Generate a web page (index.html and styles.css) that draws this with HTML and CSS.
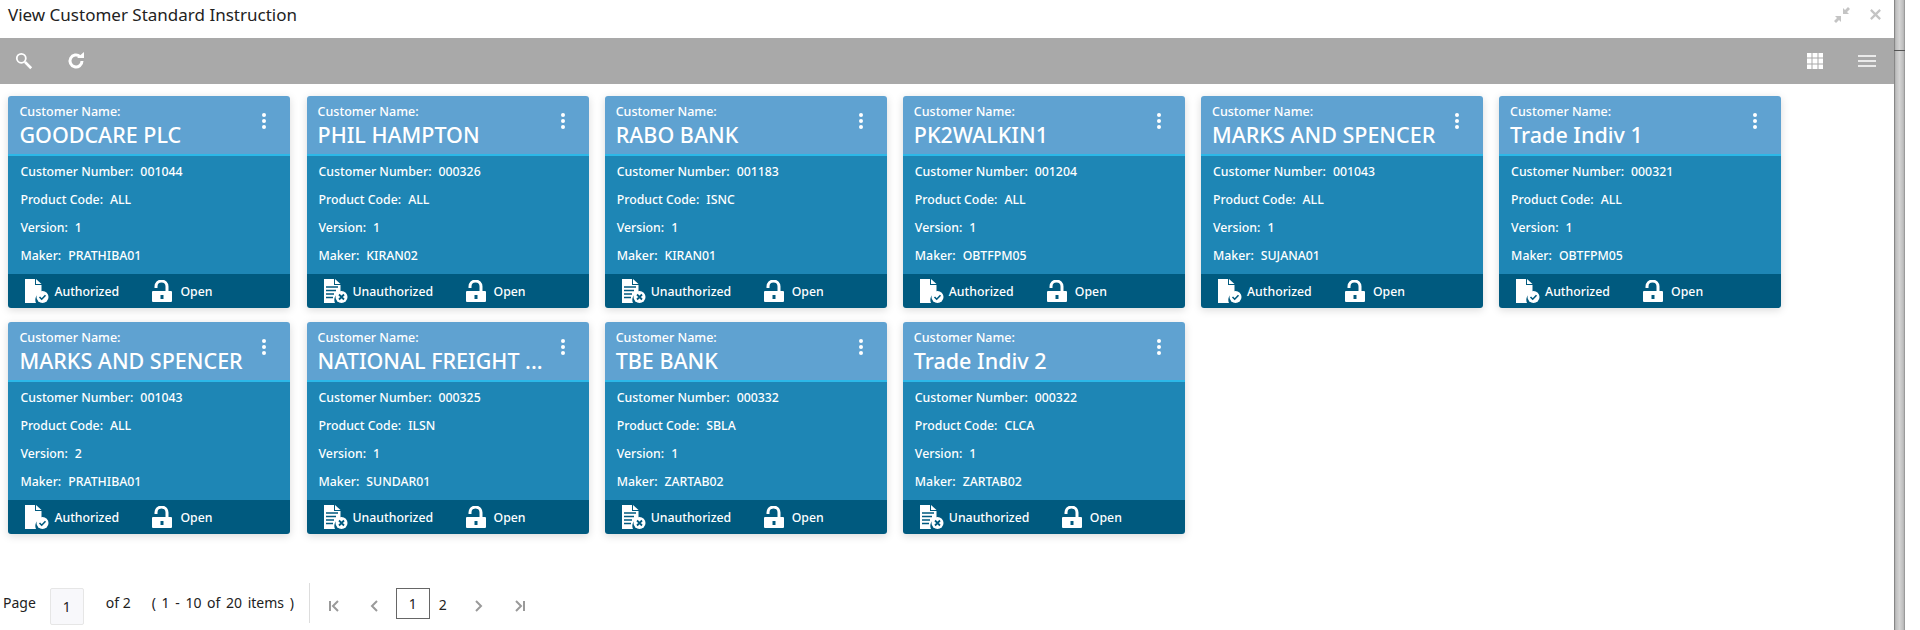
FILE: index.html
```html
<!DOCTYPE html>
<html lang="en">
<head>
  <meta charset="UTF-8" />
  <title>View Customer Standard Instruction</title>
  <link rel="stylesheet" href="styles.css">
</head>
<body>
  <svg class="defs" width="0" height="0">
    <symbol id="ic-auth" viewBox="0 0 24 24">
      <path fill="#fff" d="M0 0h10v6h6.500v8a7 7 0 0 0-5.500 10H0z"/>
      <path fill="#fff" d="M11 0l5.500 5H11z"/>
      <circle cx="17.500" cy="18" r="6" fill="#fff"/>
      <path fill="none" stroke="#005a7f" stroke-width="1.600" d="M14.500 18l2.200 2.200 3.800-4"/>
    </symbol>
    <symbol id="ic-unauth" viewBox="0 0 24 24">
      <path fill="#fff" d="M0 0h10v6h6.500v8a7 7 0 0 0-5.500 10H0z"/>
      <path fill="#fff" d="M11 0l5.500 5H11z"/>
      <path fill="none" stroke="#005a7f" stroke-width="1.300" d="M2 8h12M2 11.500h10M2 15h8M2 18.500h7"/>
      <circle cx="17.500" cy="18" r="6" fill="#fff"/>
      <path fill="none" stroke="#005a7f" stroke-width="1.800" d="M15 15.500l5 5M20 15.500l-5 5"/>
    </symbol>
    <symbol id="ic-lock" viewBox="0 0 20 22">
      <path fill="none" stroke="#fff" stroke-width="3" d="M4 8V6.500a5.500 5.500 0 0 1 11 0V12"/>
      <path fill="#fff" fill-rule="evenodd" d="M1 11h18a1 1 0 0 1 1 1v9a1 1 0 0 1-1 1H1a1 1 0 0 1-1-1v-9a1 1 0 0 1 1-1zM8.500 15v4h3v-4z"/>
    </symbol>
  </svg>

  <div class="shell">
    <div class="main">
      <div class="title-bar">
        <span class="title">View Customer Standard Instruction</span>
        <div class="win-icons">
          <svg width="18" height="18" viewBox="0 0 18 18"><path fill="#c4c4c4" d="M10 8V2l2 2 3-3 2 2-3 3 2 2zM8 10v6l-2-2-3 3-2-2 3-3-2-2z"/></svg>
          <svg width="13" height="13" viewBox="0 0 14 14"><path stroke="#c4c4c4" stroke-width="2.400" d="M2 2l10 10M12 2L2 12"/></svg>
        </div>
      </div>

      <div class="toolbar">
        <div class="tool-group">
          <svg width="18" height="18" viewBox="0 0 20 20"><circle cx="7" cy="7" r="5" fill="none" stroke="#fff" stroke-width="2"/><path stroke="#fff" stroke-width="3" d="M11 11l7 7"/></svg>
          <svg width="18" height="18" viewBox="0 0 18 18"><path fill="none" stroke="#fff" stroke-width="3" d="M15 9a6 6 0 1 1-2-4.500"/><path fill="#fff" d="M10 6h7V0z"/></svg>
        </div>
        <div class="tool-group right">
          <svg width="16" height="16" viewBox="0 0 16 16"><path fill="#fff" d="M0 0h4.500v4.500H0zM5.500 0h5v4.500h-5zM11.500 0H16v4.500h-4.500zM0 5.500h4.500v5H0zM5.500 5.500h5v5h-5zM11.500 5.500H16v5h-4.500zM0 11.500h4.500V16H0zM5.500 11.500h5V16h-5zM11.500 11.500H16V16h-4.500z"/></svg>
          <svg width="18" height="12" viewBox="0 0 18 12"><path stroke="#fff" stroke-width="1.600" d="M0 1h18M0 6h18M0 11h18"/></svg>
        </div>
      </div>

      <div class="cards" id="cards"></div>

      <div class="pager">
        <span>Page</span>
        <span class="page-input">1</span>
        <span class="of">of 2</span>
        <span class="items">( 1 - 10 of 20 items )</span>
        <div class="pager-nav">
          <svg width="12" height="12" viewBox="0 0 12 12"><path fill="none" stroke="#9a9a9a" stroke-width="2" d="M2 1v10M10 1L5 6l5 5"/></svg>
          <svg class="prev" width="12" height="12" viewBox="0 0 12 12"><path fill="none" stroke="#9a9a9a" stroke-width="2" d="M8 1L3 6l5 5"/></svg>
          <span class="page-num current">1</span>
          <span class="page-num">2</span>
          <svg class="next" width="12" height="12" viewBox="0 0 12 12"><path fill="none" stroke="#9a9a9a" stroke-width="2" d="M4 1l5 5-5 5"/></svg>
          <svg class="last" width="12" height="12" viewBox="0 0 12 12"><path fill="none" stroke="#9a9a9a" stroke-width="2" d="M10 1v10M2 1l5 5-5 5"/></svg>
        </div>
      </div>
    </div>
    <div class="scrollbar"><div class="scroll-track top"></div><div class="scroll-track"></div></div>
  </div>

  <script>
    // Card records in display order
    const records = [
      ["GOODCARE PLC", "001044", "ALL", "1", "PRATHIBA01", "Authorized"],
      ["PHIL HAMPTON", "000326", "ALL", "1", "KIRAN02", "Unauthorized"],
      ["RABO BANK", "001183", "ISNC", "1", "KIRAN01", "Unauthorized"],
      ["PK2WALKIN1", "001204", "ALL", "1", "OBTFPM05", "Authorized"],
      ["MARKS AND SPENCER", "001043", "ALL", "1", "SUJANA01", "Authorized"],
      ["Trade Indiv 1", "000321", "ALL", "1", "OBTFPM05", "Authorized"],
      ["MARKS AND SPENCER", "001043", "ALL", "2", "PRATHIBA01", "Authorized"],
      ["NATIONAL FREIGHT ...", "000325", "ILSN", "1", "SUNDAR01", "Unauthorized"],
      ["TBE BANK", "000332", "SBLA", "1", "ZARTAB02", "Unauthorized"],
      ["Trade Indiv 2", "000322", "CLCA", "1", "ZARTAB02", "Unauthorized"]
    ];

    function field(label, value) {
      return `<div class="field"><span>${label}:</span><span>${value}</span></div>`;
    }

    document.getElementById("cards").innerHTML = records.map(r => `
      <div class="card">
        <div class="card-head">
          <div class="head-text">
            <div class="head-label">Customer Name:</div>
            <div class="head-name">${r[0]}</div>
          </div>
          <div class="dots"><i></i><i></i><i></i></div>
        </div>
        <div class="card-body">
          ${field("Customer Number", r[1])}
          ${field("Product Code", r[2])}
          ${field("Version", r[3])}
          ${field("Maker", r[4])}
        </div>
        <div class="card-foot">
          <div class="status ${r[5].toLowerCase()}">
            <svg width="24" height="24"><use href="#${r[5] === "Authorized" ? "ic-auth" : "ic-unauth"}"/></svg>
            <span>${r[5]}</span>
          </div>
          <div class="status">
            <svg width="20" height="22"><use href="#ic-lock"/></svg>
            <span>Open</span>
          </div>
        </div>
      </div>`).join("");
  </script>
</body>
</html>
```
FILE: styles.css
```css
* {
  box-sizing: border-box;
}
html, body {
  height: 100%;
}
body {
  margin: 0;
  font-family: "Noto Sans", "Open Sans", sans-serif;
  background: #fff;
  color: #222;
  overflow: hidden;
}
.defs {
  position: absolute;
}
.shell {
  display: flex;
  height: 100%;
  padding-right: 15px;
}
.main {
  flex: 1;
  min-width: 0;
}
.scrollbar {
  display: flex;
  flex-direction: column;
  width: 11px;
}
.scroll-track {
  flex: 1;
  background: linear-gradient(to right, #707070 0, #bdbdbd 15%, #d4d4d4 50%, #bdbdbd 85%, #8c8c8c 100%);
}
.scroll-track.top {
  flex: none;
  height: 51px;
  border-bottom: 1px solid #555;
}
.title-bar {
  display: flex;
  align-items: center;
  justify-content: space-between;
  height: 38px;
  padding: 0 12px 9px 8px;
}
.title {
  font-size: 17px;
}
.win-icons {
  display: flex;
  align-items: center;
  gap: 18px;
}
.toolbar {
  display: flex;
  align-items: center;
  justify-content: space-between;
  height: 46px;
  padding: 0 18px 0 15px;
  background: #a9a9a9;
}
.tool-group {
  display: flex;
  align-items: center;
  gap: 34px;
}
.tool-group.right {
  gap: 35px;
}
.cards {
  display: grid;
  grid-template-columns: repeat(6, 282px);
  column-gap: 16.15px;
  row-gap: 14px;
  padding: 12px 0 0 8.4px;
}
.card {
  height: 212px;
  border-radius: 3px;
  overflow: hidden;
  color: #fff;
  box-shadow: 0 2px 8px rgba(0, 0, 0, 0.15);
}
.card-head {
  display: flex;
  justify-content: space-between;
  height: 60px;
  padding: 7px 24px 0 11px;
  background: #5fa2d1;
  border-bottom: 2px solid #2cb8e8;
}
.head-label {
  font-size: 12.5px;
  font-weight: 500;
  line-height: 17px;
}
.head-name {
  font-size: 21.5px;
  font-weight: 500;
  line-height: 30px;
  white-space: nowrap;
}
.dots {
  display: flex;
  flex-direction: column;
  gap: 2px;
  padding-top: 10px;
}
.dots i {
  display: block;
  width: 4px;
  height: 4px;
  border-radius: 50%;
  background: #fff;
}
.card-body {
  height: 118px;
  padding: 1px 12px 0;
  background: #1e86b5;
}
.field {
  display: flex;
  gap: 7px;
  height: 28px;
  align-items: center;
  font-size: 12.3px;
  font-weight: 500;
}
.card-foot {
  display: flex;
  align-items: center;
  height: 34px;
  padding-left: 17px;
  background: #005a7f;
  font-size: 12.3px;
  font-weight: 500;
}
.status {
  display: flex;
  align-items: center;
  gap: 8px;
}
.status.authorized {
  gap: 5px;
  width: 127px;
}
.status.unauthorized {
  gap: 5px;
  width: 142px;
}
.pager {
  display: flex;
  align-items: center;
  height: 40px;
  margin-top: 48px;
  padding-left: 3px;
  font-size: 14px;
}
.page-input {
  display: flex;
  align-items: center;
  justify-content: center;
  width: 34px;
  height: 37px;
  margin: 9px 22px 0 14px;
  background: #f8f8fb;
  border: 1px solid #e6e6e6;
  border-radius: 2px;
}
.items {
  margin-left: 21px;
  word-spacing: 2px;
}
.pager-nav {
  display: flex;
  align-items: center;
  height: 40px;
  margin: 2px 0 0 15px;
  padding-left: 18px;
  border-left: 1px solid #ddd;
}
.pager-nav svg {
  margin-top: 6px;
}
.pager-nav .prev {
  margin-left: 29px;
  margin-right: 15px;
}
.page-num {
  display: flex;
  align-items: center;
  justify-content: center;
  width: 26px;
  height: 31px;
  margin-top: 2px;
}
.page-num.current {
  width: 34px;
  margin-top: 0;
  border: 1px solid #666;
}
.next {
  margin-left: 16px;
}
.last {
  margin-left: 30px;
}
```
